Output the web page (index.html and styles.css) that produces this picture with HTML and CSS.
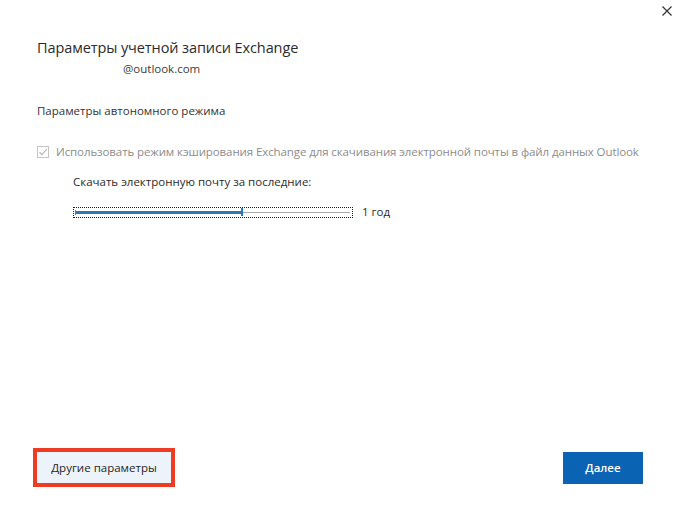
FILE: index.html
```html
<!DOCTYPE html>
<html lang="ru">
<head>
<meta charset="utf-8">
<title>Параметры учетной записи Exchange</title>
<link rel="stylesheet" href="styles.css">
</head>
<body>
<div class="dialog">
  <button class="close" aria-label="Закрыть">
    <svg width="10" height="10" viewBox="0 0 10 10"><path d="M0.5 0.5 L9.5 9.5 M9.5 0.5 L0.5 9.5" stroke="#333" stroke-width="1.2" fill="none"/></svg>
  </button>

  <main class="content">
    <h1 class="title">Параметры учетной записи Exchange</h1>
    <div class="account">@outlook.com</div>

    <h2 class="section">Параметры автономного режима</h2>

    <label class="check disabled">
      <span class="box">
        <svg width="12" height="12" viewBox="0 0 12 12"><path d="M2.5 6.2 L5 8.7 L9.8 3" stroke="#b4b4b4" stroke-width="1.1" fill="none"/></svg>
      </span>
      <span class="check-text">Использовать режим кэширования Exchange для скачивания электронной почты в файл данных Outlook</span>
    </label>

    <div class="download">
      <div class="download-label">Скачать электронную почту за последние:</div>
      <div class="slider-row">
        <div class="slider">
          <span class="tick"></span>
          <span class="fill" style="width: 165px"></span>
          <span class="thumb"></span>
          <span class="rest"></span>
        </div>
        <span class="slider-value">1 год</span>
      </div>
    </div>
  </main>

  <footer class="actions">
    <div class="highlight">
      <button class="btn secondary">Другие параметры</button>
    </div>
    <button class="btn primary">Далее</button>
  </footer>
</div>
</body>
</html>
```
FILE: styles.css
```css
* { box-sizing: border-box; }

html, body {
  margin: 0;
  padding: 0;
  background: #ffffff;
}

body {
  font-family: "Open Sans", "Noto Sans", "Liberation Sans", sans-serif;
  color: #262626;
}

.dialog {
  position: relative;
  width: 680px;
  height: 522px;
  display: flex;
  flex-direction: column;
  padding: 0 37px 35px 37px;
  background: #fff;
}

.close {
  position: absolute;
  top: 6px;
  right: 8px;
  width: 10px;
  height: 10px;
  padding: 0;
  border: 0;
  background: transparent;
  display: flex;
}

.content {
  flex: 1;
  display: flex;
  flex-direction: column;
  padding-top: 38px;
}

.title {
  margin: 0;
  font-weight: 400;
  font-size: 14.5px;
  line-height: 20px;
  color: #2b2b2b;
  letter-spacing: -0.1px;
}

.account {
  margin: 3px 0 0 86px;
  font-size: 11.5px;
  line-height: 16px;
  color: #3a3a3a;
}

.section {
  margin: 26px 0 0 0;
  font-weight: 400;
  font-size: 11.5px;
  line-height: 16px;
  color: #333;
}

.check {
  margin-top: 25px;
  display: flex;
  align-items: center;
  gap: 7px;
}

.check .box {
  width: 12px;
  height: 12px;
  border: 1px solid #c4c4c4;
  display: flex;
  align-items: center;
  justify-content: center;
  flex: none;
}

.check .box svg { display: block; margin: -1px; }

.check-text {
  font-size: 11.5px;
  line-height: 16px;
  color: #8c8c8c;
  letter-spacing: -0.1px;
}

.download {
  margin-left: 36px;
  margin-top: 14px;
  display: flex;
  flex-direction: column;
}

.download-label {
  font-size: 11.5px;
  line-height: 16px;
  color: #2b2b2b;
}

.slider-row {
  margin-top: 14px;
  display: flex;
  align-items: center;
  gap: 9px;
}

.slider {
  width: 280px;
  height: 11px;
  border: 1px dotted #1a1a1a;
  display: flex;
  align-items: center;
  padding: 0 2px 0 1px;
}

.slider .tick {
  width: 1px;
  height: 5px;
  background: #7a7a7a;
  flex: none;
}

.slider .fill {
  height: 3px;
  background: #2a78b5;
  flex: none;
}

.slider .thumb {
  width: 2px;
  height: 8px;
  background: #2a78b5;
  flex: none;
}

.slider .rest {
  flex: 1;
  height: 1px;
  background: #a8a8a8;
}

.slider-value {
  font-size: 11.5px;
  line-height: 16px;
  color: #2b2b2b;
}

.actions {
  display: flex;
  align-items: center;
  justify-content: space-between;
  margin-left: -4px;
}

.highlight {
  border: 4px solid #ee3b24;
  display: flex;
}

.btn {
  font-family: inherit;
  font-size: 11.5px;
  border: 0;
  padding: 0;
  cursor: pointer;
}

.btn.secondary {
  width: 134px;
  height: 31px;
  background: #edf3fa;
  color: #262626;
}

.btn.primary {
  width: 80px;
  height: 32px;
  background: #0b63b3;
  color: #ffffff;
  font-weight: 600;
}
```
